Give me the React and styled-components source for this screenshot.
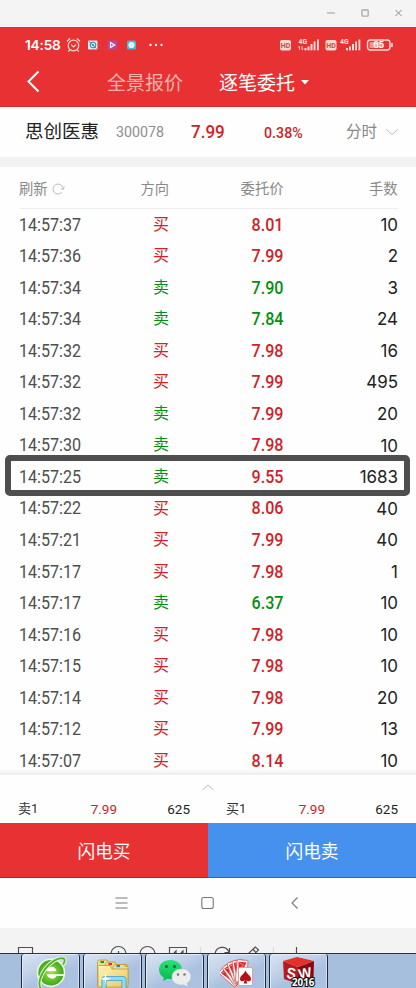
import React from "react";
import styled, { createGlobalStyle } from "styled-components";

const Global = createGlobalStyle`
  * { box-sizing: border-box; }
  body { margin: 0; background: #fff; font-family: Roboto, "Noto Sans CJK SC", sans-serif; }
  svg { display: block; flex: none; }
`;

const RED = "#e83133";
const TEXT_RED = "#ce2328";
const GREEN = "#078e10";

const Screen = styled.div`
  width: 416px;
  height: 988px;
  overflow: hidden;
  display: flex;
  flex-direction: column;
  background: #fefefe;
`;

const TitleBar = styled.header`
  height: 27px;
  flex: none;
  background: #f4f4f4;
  display: flex;
  justify-content: flex-end;
  align-items: center;
  gap: 26px;
  padding-right: 14px;
  padding-bottom: 1px;
`;

const AppHeader = styled.div`
  height: 80px;
  flex: none;
  background: ${RED};
  border-bottom: 1px solid #d42b2d;
  color: #fff;
`;

const StatusBar = styled.div`
  height: 30px;
  padding: 6px 22px 0 25px;
  display: flex;
  justify-content: space-between;
  align-items: center;
`;

const StatusTime = styled.span`
  font: 600 13.7px/20px Inter, sans-serif;
  width: 36px;
  letter-spacing: -0.2px;
  white-space: nowrap;
  margin-right: 5px;
`;

const StatusLeft = styled.div`
  display: flex;
  align-items: center;
`;

const NavRow = styled.nav`
  height: 48px;
  display: flex;
  align-items: center;
  padding: 2px 0 0 26px;
`;

const NavTab = styled.span`
  font-size: 19px;
  line-height: 28px;
  width: ${(p) => p.$width}px;
  color: ${(p) => (p.$active ? "#fff" : "#f6b3ab")};
  white-space: nowrap;
  padding-top: 3px;
  margin-left: ${(p) => p.$gap}px;
`;

const StockRow = styled.section`
  height: 50px;
  flex: none;
  display: grid;
  grid-template-columns: 91px 75px 73px 82px 30px 1fr;
  align-items: center;
  padding: 2px 0 0 25px;
`;

const Label = styled.span`
  display: block;
  font-family: ${(p) => (p.$wide ? "Inter" : "Roboto")}, "Noto Sans CJK SC", sans-serif;
  font-size: ${(p) => p.$size}px;
  font-weight: ${(p) => p.$weight || 400};
  color: ${(p) => p.$color};
  line-height: 1.4;
  white-space: nowrap;
  transform: scaleX(${(p) => p.$stretch || 1});
  transform-origin: ${(p) => p.$align || "left"} center;
  text-align: ${(p) => p.$align || "left"};
`;

const Band = styled.div`
  height: 10px;
  flex: none;
  background: #f2f2f2;
`;

const columns = "75px 75px 114.500px 114px";

const TableHead = styled.div`
  height: 42px;
  flex: none;
  display: grid;
  grid-template-columns: ${columns};
  align-items: center;
  margin: 0 18px 0 19px;
  padding-top: 3px;
  border-bottom: 1px solid #eeeeee;
`;

const Refresh = styled.div`
  display: flex;
  align-items: center;
  gap: 4px;
`;

const Orders = styled.main`
  height: 566px;
  flex: none;
  overflow: hidden;
  background: linear-gradient(to bottom, transparent 559px, #ededed 566px);
`;

const OrderRow = styled.div`
  position: relative;
  height: 31.55px;
  display: grid;
  grid-template-columns: ${columns};
  align-items: center;
  padding-left: 19px;
`;

const Marker = styled.div`
  position: absolute;
  left: 5px;
  top: -6px;
  width: 405px;
  height: 41px;
  border: 6px solid #4e4e4e;
  border-radius: 5px;
`;

const Quotes = styled.section`
  height: 48px;
  flex: none;
  display: flex;
  flex-direction: column;
  align-items: center;
  padding-top: 9px;
`;

const QuoteLine = styled.div`
  width: 100%;
  margin-top: 9px;
  display: grid;
  grid-template-columns: 1fr 1fr;
`;

const Quote = styled.div`
  display: grid;
  grid-template-columns: 59px 40px 73px;
  justify-content: space-between;
  padding: 0 18px 0 18px;
`;

const Actions = styled.div`
  height: 55px;
  flex: none;
  display: grid;
  grid-template-columns: 1fr 1fr;
`;

const Action = styled.button`
  border: 0;
  border-bottom: 1px solid ${(p) => (p.$sell ? "#38689f" : "#a92c2d")};
  padding: 0 0 1px;
  color: #fff;
  font: 400 17.7px Roboto, "Noto Sans CJK SC", sans-serif;
  background: ${(p) => (p.$sell ? "#4690ee" : RED)};
`;

const SystemNav = styled.div`
  height: 50px;
  flex: none;
  display: flex;
  justify-content: center;
  align-items: center;
  gap: 73px;
`;

const ToolStrip = styled.div`
  height: 25px;
  flex: none;
  background: #f3f3f3;
`;

const TaskBar = styled.footer`
  height: 35px;
  flex: none;
  display: flex;
  gap: 3px;
  padding-left: 21px;
  background: #a6bfdd;
  border-top: 1px solid #273342;
`;

const Task = styled.div`
  width: 59px;
  height: 36px;
  flex: none;
  border: 1px solid #1e2a3b;
  border-width: 0 1px 0 1px;
  border-radius: 3px 3px 0 0;
  background: linear-gradient(155deg, #d9e4f3 0%, #bfd0e8 38%, #aac1df 60%, #abc3e0 100%);
  box-shadow: inset 1px 1px 0 #e3edf8, inset -1px 0 0 #d3e1f2;
  display: flex;
  justify-content: center;
`;

const orders = [
  ["14:57:37", "买", "8.01", "10"],
  ["14:57:36", "买", "7.99", "2"],
  ["14:57:34", "卖", "7.90", "3", true],
  ["14:57:34", "卖", "7.84", "24", true],
  ["14:57:32", "买", "7.98", "16"],
  ["14:57:32", "买", "7.99", "495"],
  ["14:57:32", "卖", "7.99", "20"],
  ["14:57:30", "卖", "7.98", "10"],
  ["14:57:25", "卖", "9.55", "1683"],
  ["14:57:22", "买", "8.06", "40"],
  ["14:57:21", "买", "7.99", "40"],
  ["14:57:17", "买", "7.98", "1"],
  ["14:57:17", "卖", "6.37", "10", true],
  ["14:57:16", "买", "7.98", "10"],
  ["14:57:15", "买", "7.98", "10"],
  ["14:57:14", "买", "7.98", "20"],
  ["14:57:12", "买", "7.99", "13"],
  ["14:57:07", "买", "8.14", "10"],
];

const WindowIcons = () => (
  <>
    <svg width="8" height="8"><path d="M0 4h8" stroke="#bdbdbd" strokeWidth="1.6" /></svg>
    <svg width="8" height="8"><rect x="1" y="1" width="6.2" height="6.2" rx=".5" fill="none" stroke="#aaa" strokeWidth="1.3" /></svg>
    <svg width="7" height="8"><path d="M.5 1l6 6M6.500 1l-6 6" stroke="#888" strokeWidth="1" /></svg>
  </>
);

const StatusApps = () => (
  <svg width="98" height="16" viewBox="0 0 98 16">
    <g fill="none" stroke="#ffd9d4" strokeWidth="1.2" strokeLinecap="round">
      <circle cx="7.500" cy="8.500" r="5.300" />
      <path d="M5.500 8l2 2 2.200-2M1.300 4l2.500-2.300M13.700 4l-2.500-2.300M3.600 13l-1 1.200M11.400 13l1 1.200" />
    </g>
    <rect x="22" y="3.500" width="9.500" height="9" rx="1" fill="#d5edf4" />
    <circle cx="27" cy="8" r="2.900" fill="none" stroke="#347da7" strokeWidth="1" />
    <path d="M23 4.500l7.500 7" stroke="#347da7" strokeWidth=".8" />
    <circle cx="27" cy="8" r="1" fill="#347da7" />
    <rect x="41.500" y="3.500" width="9.500" height="9" rx="1.500" fill="#b44a9c" />
    <path d="M44.500 5.500v5l4.200-2.500z" fill="#9c61be" stroke="#fff" strokeWidth="1.100" />
    <rect x="61" y="3.500" width="9" height="9" rx="1.500" fill="#47b8d6" />
    <circle cx="65.500" cy="8" r="3.100" fill="#d8faff" />
    <g fill="#fff"><circle cx="84.500" cy="8" r="1.150" /><circle cx="90" cy="8" r="1.150" /><circle cx="95.500" cy="8" r="1.150" /></g>
  </svg>
);

const HdBadge = ({ x }) => (
  <g transform={`translate(${x} 0)`}>
    <rect y="3" width="11" height="10.500" rx="2" fill="#fbd7cf" />
    <text x="5.500" y="11" textAnchor="middle" fontSize="7" fontWeight="700" fontFamily="Roboto" fill="#c34b43">HD</text>
  </g>
);

const Signal = ({ x, arrows }) => (
  <g transform={`translate(${x} 0)`} fill="#ffe0da">
    <text x="0" y="7" fontSize="6.800" fontWeight="700" fontFamily="Roboto">4G</text>
    {arrows && <path d="M1 9v4M3.500 9v4M0 10.500l1-1.500M3.500 13l1-1.500" stroke="#ffe0da" strokeWidth=".8" />}
    <rect x="6" y="11" width="2" height="2.300" /><rect x="9" y="9.500" width="2" height="3.800" />
    <rect x="12" y="7" width="2" height="6.300" /><rect x="15.200" y="4.500" width="1.800" height="8.800" />
    <rect x="18.500" y="2.500" width="1.800" height="10.800" />
  </g>
);

const StatusRight = () => (
  <svg width="114" height="16" viewBox="0 0 114 16">
    <HdBadge x="0" /><Signal x="18.500" arrows /><HdBadge x="45.500" /><Signal x="60" />
    <rect x="87.500" y="3" width="22.500" height="10" rx="3" fill="none" stroke="#ffe0da" strokeWidth="1.400" />
    <rect x="89.500" y="5" width="13" height="6" rx="1" fill="#f09289" />
    <path d="M112 6v4" stroke="#ffe0da" strokeWidth="1.500" />
    <text x="98.700" y="11" textAnchor="middle" fontSize="8.500" fontWeight="700" fontFamily="Inter" fill="#fff">65</text>
  </svg>
);

const ToolIcons = () => (
  <svg width="416" height="25" viewBox="0 0 416 25" fill="none" stroke="#505050" strokeWidth="1.200">
    <path d="M18.500 26v-6.500h14V26M169.500 26v-6.500h17V26M174 25l2-2v2M181 25l2-2v2" />
    <circle cx="118.500" cy="26" r="7.500" /><path d="M118.500 23v3" />
    <circle cx="147.500" cy="26" r="7.500" />
    <path d="M215 26c1-8 11-9 14-2m.5-4v4.500h-5M248 26l7.200-7 3.300 2.800-4 4.200M252.500 21l3 3M296.500 19v7" />
    <path d="M200.500 19v7M273.500 19v7" stroke="#d9d9d9" />
  </svg>
);

const BrowserIcon = () => (
  <svg width="34" height="34" viewBox="0 0 34 34">
    <defs><radialGradient id="leaf"><stop offset="0" stopColor="#a3df43" /><stop offset="1" stopColor="#40a91e" /></radialGradient></defs>
    <circle cx="17" cy="18.700" r="14.300" fill="#edf8e4" />
    <circle cx="17" cy="18.700" r="12.700" fill="url(#leaf)" />
    <path d="M12.500 17.300c.5-6 9.500-6 10 0z" fill="#fff" />
    <path d="M12.500 20.300h17.300v1.800H22.500c-1 3.700-8.500 3.700-10-1.800z" fill="#fff" />
    <path d="M6.500 34C1 25 17 2 29.500 4.500c2 1 1 4-.5 6" fill="none" stroke="#f4faee" strokeWidth="3.800" />
    <path d="M6.500 34C1 25 17 2 29.500 4.500c2 1 1 4-.5 6" fill="none" stroke="#55b523" strokeWidth="2" />
  </svg>
);

const FolderIcon = () => (
  <svg width="34" height="34" viewBox="0 0 34 34">
    <defs><linearGradient id="folder" x2="1" y2="1"><stop stopColor="#fff4b4" /><stop offset="1" stopColor="#e8ca62" /></linearGradient></defs>
    <g fill="#f5dc82" stroke="#b99b48" strokeWidth=".8">
      <path d="M1.500 32V7.500L3 6h8l2 2.500h6l1 2h11V32z" />
      <path d="M9.500 30V9.500L11 8h8l2 3h10v19z" />
      <path d="M17 30V12.500l1.500-2H28l1.500 2H32V30z" />
      <path fill="url(#folder)" d="M2 33V12.500l1-1h11l2 3.500h16v18z" />
    </g>
    <path d="M4.500 8h3.500" stroke="#1c9837" strokeWidth="2.200" /><path d="M12.500 10h3.500" stroke="#cf392b" strokeWidth="2.200" /><path d="M20.500 12h3.500" stroke="#1688d8" strokeWidth="2.200" />
    <path d="M8 35V26q0-1.500 1.500-1.500h17q1.500 0 1.500 1.500v9" fill="none" stroke="#429ec5" strokeWidth="5" />
    <path d="M8 35V26q0-1.500 1.500-1.500h17q1.500 0 1.500 1.500v9" fill="none" stroke="#91daf1" strokeWidth="3.400" />
    <path d="M9.500 18l.8 5.500 5 1.500-5 1-.8 5-.8-5-4.500-1 4.500-1.500z" fill="#fff" />
  </svg>
);

const ChatIcon = () => (
  <svg width="34" height="34" viewBox="0 0 34 34">
    <defs><linearGradient id="chat" x2="0" y2="1"><stop stopColor="#2ae276" /><stop offset="1" stopColor="#08b94d" /></linearGradient></defs>
    <path d="M12.500 6C6 6 1 10 1 15.500c0 4 2 6.500 5 8.200L5 27l4.500-2.300C18 26.500 24 21.500 24 15.500 24 10 18.500 6 12.500 6z" fill="url(#chat)" />
    <path d="M23.500 15c-5.500 0-9.500 3.500-9.500 8 0 5 5 8.500 11.500 7.500l4 1.800-.8-3C36 24 32.500 15 23.500 15z" fill="#ededed" stroke="#cfd9df" strokeWidth=".5" />
    <g fill="#1a713b"><circle cx="8.500" cy="12.500" r="1.600" /><circle cx="16.500" cy="12.500" r="1.600" /></g>
    <g fill="#767b7c"><circle cx="20" cy="20.500" r="1.300" /><circle cx="26.500" cy="20.500" r="1.300" /></g>
  </svg>
);

const CardsIcon = () => (
  <svg width="34" height="34" viewBox="0 0 34 34">
    {[-48, -34, -20, -7, 5].map((angle) => (
      <g key={angle} transform={`rotate(${angle} 21 31)`}>
        <rect x="15" y="6" width="11" height="22" rx="1.500" fill="#fff5f3" stroke="#cb4b48" strokeWidth=".7" />
        <path d="M16.500 8h8L18 25z" fill="#dc2526" />
        <path d="M17.500 9l4.500 2-4 4" stroke="#f7b1aa" fill="none" strokeWidth=".7" />
      </g>
    ))}
    <rect x="18.500" y="13.500" width="14" height="18" rx="1.500" fill="#fff" stroke="#d99494" strokeWidth=".8" />
    <path d="M25.500 16.500c-1.500 4-5.500 5-5.500 8.500 0 2.800 3.500 3 4.700 1l-1 3.500h3.600l-1-3.500c1.200 2 4.700 1.800 4.700-1 0-3.500-4-4.500-5.500-8.500z" fill="#b51117" />
  </svg>
);

const CadIcon = () => (
  <svg width="36" height="34" viewBox="0 0 36 34">
    <path d="M2 7l15 6v17L3 25z" fill="#b51b1f" /><path d="M17 13l16-6-.5 18L17 30z" fill="#850a15" />
    <path d="M2 7l14-4 17 4-16 6z" fill="#e5302b" />
    <g fontFamily="Liberation Sans" fontWeight="700" fill="#fff">
      <text x="5" y="24" fontSize="15.500" transform="rotate(8 5 24) scale(.9 1)" dx=".5">S</text>
      <text x="18.300" y="25" fontSize="14" transform="rotate(-10 18.300 25)">W</text>
      <text x="11" y="32" fontSize="9.800" fontFamily="Open Sans" stroke="#111" strokeWidth="2.200" paintOrder="stroke">2016</text>
    </g>
  </svg>
);

const taskIcons = [BrowserIcon, FolderIcon, ChatIcon, CardsIcon, CadIcon];

export default function App() {
  return (
    <Screen>
      <Global />
      <TitleBar><WindowIcons /></TitleBar>
      <AppHeader>
        <StatusBar>
          <StatusLeft><StatusTime>14:58</StatusTime><StatusApps /></StatusLeft>
          <StatusRight />
        </StatusBar>
        <NavRow>
          <svg width="15" height="24"><path d="M12.500 1.500L2.500 11.500l10 10" fill="none" stroke="#fff" strokeWidth="2" /></svg>
          <NavTab $width={76} $gap={66}>全景报价</NavTab>
          <NavTab $active $width={76} $gap={36}>逐笔委托</NavTab>
          <svg width="15" height="8"><path d="M6 2h8l-4 4.500z" fill="#fff" /></svg>
        </NavRow>
      </AppHeader>
      <StockRow>
        <Label $size={18.5} $color="#222">思创医惠</Label>
        <Label $size={15.5} $color="#8d8d8d" $stretch={0.92}>300078</Label>
        <Label $size={18.5} $weight={500} $color={TEXT_RED} $stretch={0.92}>7.99</Label>
        <Label $size={15} $weight={500} $color={TEXT_RED} $stretch={0.95}>0.38%</Label>
        <Label $size={15.5} $color="#898989">分时</Label>
        <svg width="22" height="10"><path d="M10.500 1.500l5.500 5 5.500-5" fill="none" stroke="#bbb" /></svg>
      </StockRow>
      <Band />
      <TableHead>
        <Refresh>
          <Label $size={14.3} $color="#898989">刷新</Label>
          <svg width="14" height="14"><path d="M10 10.200a5 5 0 1 1 1-4.200M12.300 4.500l-1 3-2.500-1" fill="none" stroke="#bdbdbd" /></svg>
        </Refresh>
        <Label $size={14.3} $color="#898989" $align="right">方向</Label>
        <Label $size={14.3} $color="#898989" $align="right">委托价</Label>
        <Label $size={14.3} $color="#898989" $align="right">手数</Label>
      </TableHead>
      <Orders>
        {orders.map(([time, side, price, volume, green], i) => (
          <OrderRow key={i}>
            <Label $size={17.5} $color="#4e4e4e" $stretch={0.92}>{time}</Label>
            <Label $size={16} $color={side === "卖" ? GREEN : TEXT_RED} $align="right">{side}</Label>
            <Label $size={17.5} $weight={500} $color={green ? GREEN : TEXT_RED} $stretch={0.92} $align="right">{price}</Label>
            <Label $wide $size={17.3} $color="#222" $stretch={0.98} $align="right">{volume}</Label>
            {i === 8 && <Marker />}
          </OrderRow>
        ))}
      </Orders>
      <Quotes>
        <svg width="14" height="7"><path d="M1.500 6L7 1l5.500 5" fill="none" stroke="#bcbcbc" /></svg>
        <QuoteLine>
          {["卖1", "买1"].map((name) => (
            <Quote key={name}>
              <Label $size={13} $color="#333">{name}</Label>
              <Label $size={13.5} $color={TEXT_RED} $align="right">7.99</Label>
              <Label $size={13.5} $color="#222" $align="right">625</Label>
            </Quote>
          ))}
        </QuoteLine>
      </Quotes>
      <Actions><Action>闪电买</Action><Action $sell>闪电卖</Action></Actions>
      <SystemNav>
        <svg width="13" height="14"><path d="M.5 2h12M.5 7h12M.5 12h12" stroke="#777" /></svg>
        <svg width="13" height="14"><rect x=".8" y="1.500" width="11.400" height="11" rx="2" fill="none" stroke="#777" strokeWidth="1.100" /></svg>
        <svg width="14" height="14"><path d="M10.500 1.500L5 7l5.500 5.500" fill="none" stroke="#777" strokeWidth="1.100" /></svg>
      </SystemNav>
      <ToolStrip><ToolIcons /></ToolStrip>
      <TaskBar>{taskIcons.map((Icon, i) => <Task key={i}><Icon /></Task>)}</TaskBar>
    </Screen>
  );
}
